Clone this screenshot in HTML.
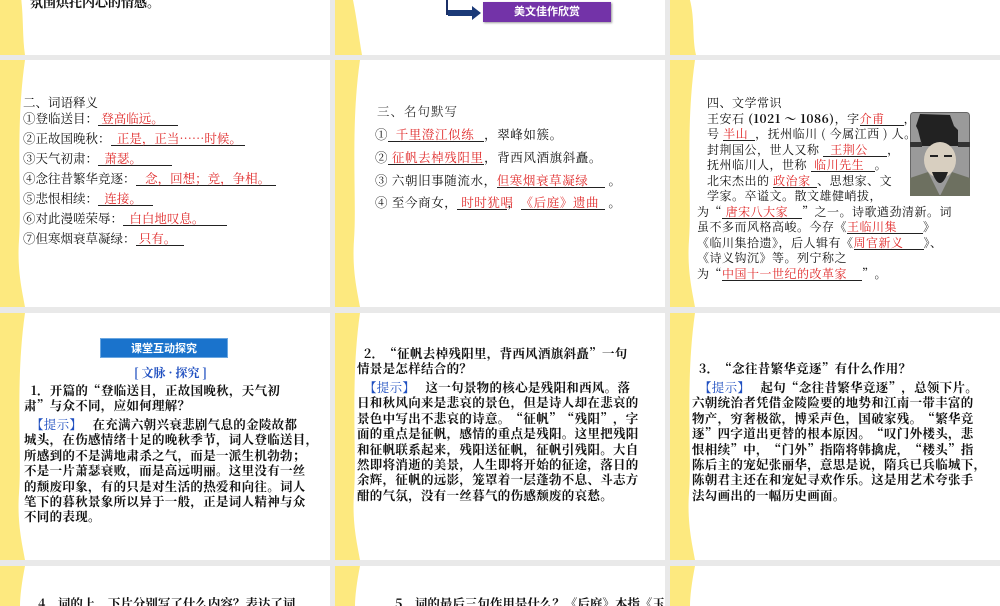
<!DOCTYPE html>
<html><head><meta charset="utf-8">
<style>
*{margin:0;padding:0;box-sizing:border-box}
body{width:1000px;height:600px;background:#e9e9e9;position:relative;overflow:hidden;font-family:"Noto Serif CJK SC","Liberation Serif",serif;color:#111}
.s{position:absolute;background:#fff;overflow:hidden}
.s svg.b{position:absolute;left:0;top:0}
.t{position:absolute;white-space:nowrap;font-size:12.5px}
.r{color:#e02828}
.u{display:inline-block;border-bottom:1px solid #222;line-height:13px;text-align:left}
.bl{color:#1f4fc0}
.p{position:absolute;font-size:12.5px;line-height:15.4px;white-space:nowrap;letter-spacing:0.3px;font-weight:bold}
.p .k{color:#1f4fc0;font-weight:normal}
.c3 .t{font-size:12px;letter-spacing:0.5px}
</style></head><body>

<!-- Row 1 -->
<div class="s" style="left:0;top:-10px;width:330px;height:65px">
<svg class="b" width="30" height="65"><path d="M0,0 L20,0 C24,25 22,45 25,65 L0,65Z" fill="#fde97f"/></svg>
<div class="t" style="left:30px;top:2px;font-weight:bold;font-size:13px">氛围烘托内心的情感。</div>
</div>
<div class="s" style="left:335px;top:0;width:330px;height:55px">
<svg class="b" width="30" height="55"><path d="M0,0 L18,0 C22,20 24,38 27,55 L0,55Z" fill="#fde97f"/></svg>
<div style="position:absolute;left:111px;top:0;width:2px;height:15px;background:#1b2f66"></div>
<svg style="position:absolute;left:113px;top:6px" width="34" height="14"><path d="M0,4 H24 V0 L33,7 L24,14 V10 H0Z" fill="#1b3a78"/></svg>
<div style="position:absolute;left:148px;top:2px;width:128px;height:20px;background:#7333a8;color:#fff;font:bold 11px 'Liberation Sans','Noto Sans CJK SC',sans-serif;text-align:center;line-height:20px;box-shadow:1px 1px 2px #999">美文佳作欣赏</div>
</div>
<div class="s" style="left:670px;top:0;width:330px;height:55px">
<svg class="b" width="30" height="55"><path d="M0,0 L20,0 C25,20 22,38 26,55 L0,55Z" fill="#fde97f"/></svg>
</div>

<!-- Row 2 -->
<div class="s" style="left:0;top:60px;width:330px;height:247px">
<svg class="b" width="30" height="247"><path d="M0,0 L25,0 C15,70 22,140 19,180 C17,210 22,230 25,247 L0,247Z" fill="#fde97f"/></svg>
<div class="t" style="left:23px;top:33px">二、词语释义</div>
<div class="t" style="left:23px;top:49px">①登临送目：<span class="u r" style="width:80px">&nbsp;登高临远。</span></div>
<div class="t" style="left:23px;top:69px">②正故国晚秋：<span class="u r" style="width:134px">&nbsp;&nbsp;正是，正当……时候。</span></div>
<div class="t" style="left:23px;top:89px">③天气初肃：<span class="u r" style="width:74px">&nbsp;&nbsp;萧瑟。</span></div>
<div class="t" style="left:23px;top:109px">④念往昔繁华竞逐：<span class="u r" style="width:140px">&nbsp;&nbsp;&nbsp;念，回想；竞，争相。</span></div>
<div class="t" style="left:23px;top:129px">⑤悲恨相续：<span class="u r" style="width:55px">&nbsp;&nbsp;连接。</span></div>
<div class="t" style="left:23px;top:149px">⑥对此漫嗟荣辱：<span class="u r" style="width:104px">&nbsp;&nbsp;白白地叹息。</span></div>
<div class="t" style="left:23px;top:169px">⑦但寒烟衰草凝绿：<span class="u r" style="width:48px">&nbsp;只有。</span></div>
</div>
<div class="s" style="left:335px;top:60px;width:330px;height:247px">
<svg class="b" width="30" height="247"><path d="M0,0 L25,0 C15,70 22,140 19,180 C17,210 22,230 25,247 L0,247Z" fill="#fde97f"/></svg>
<div class="t" style="left:42px;top:42px;color:#333;letter-spacing:1px">三、名句默写</div>
<div class="t" style="left:40px;top:65px;letter-spacing:0.6px">①<span class="u r" style="width:96px">&nbsp;&nbsp;千里澄江似练</span>，翠峰如簇。</div>
<div class="t" style="left:40px;top:88px;letter-spacing:0.6px">②<span class="u r" style="width:96px">&nbsp;征帆去棹残阳里</span>，背西风酒旗斜矗。</div>
<div class="t" style="left:40px;top:111px;letter-spacing:0.6px">③ 六朝旧事随流水，<span class="u r" style="width:108px">但寒烟衰草凝绿</span>&nbsp;。</div>
<div class="t" style="left:40px;top:133px;letter-spacing:0.6px">④ 至今商女，<span class="u r" style="width:50px">&nbsp;时时犹唱</span>，<span class="u r" style="width:84px">《后庭》遗曲</span>&nbsp;。</div>
</div>
<div class="s c3" style="left:670px;top:60px;width:330px;height:247px">
<svg class="b" width="30" height="247"><path d="M0,0 L25,0 C15,70 22,140 19,180 C17,210 22,230 25,247 L0,247Z" fill="#fde97f"/></svg>
<div class="t" style="left:37px;top:34px">四、文学常识</div>
<div class="t" style="left:37px;top:50px">王安石 <b>(1021 ～ 1086)</b>，字<span class="u r" style="width:44px">介甫</span>，</div>
<div class="t" style="left:37px;top:65px">号 <span class="u r" style="width:32px">半山</span>，抚州临川 ( 今属江西 ) 人。</div>
<div class="t" style="left:37px;top:81px">封荆国公，世人又称 <span class="u r" style="width:64px">&nbsp;&nbsp;王荆公</span>，</div>
<div class="t" style="left:37px;top:96px">抚州临川人，世称 <span class="u r" style="width:64px">&nbsp;临川先生</span>。</div>
<div class="t" style="left:37px;top:112px">北宋杰出的 <span class="u r" style="width:44px">政治家</span>、思想家、文</div>
<div class="t" style="left:37px;top:127px">学家。卒谥文。散文雄健峭拔，</div>
<div class="t" style="left:27px;top:143px">为“<span class="u r" style="width:80px">&nbsp;唐宋八大家</span>”之一。诗歌遒劲清新。词</div>
<div class="t" style="left:27px;top:158px">虽不多而风格高峻。今存《<span class="u r" style="width:76px">王临川集</span>》</div>
<div class="t" style="left:27px;top:174px">《临川集拾遗》，后人辑有《<span class="u r" style="width:70px">周官新义</span>》、</div>
<div class="t" style="left:27px;top:189px">《诗义钩沉》等。列宁称之</div>
<div class="t" style="left:27px;top:205px">为“<span class="u r" style="width:140px">中国十一世纪的改革家</span>”。</div>
<svg style="position:absolute;left:240px;top:52px" width="60" height="84"><rect x="0.5" y="0.5" width="59" height="83" rx="3" fill="#9a9a9a" stroke="#666"/><path d="M6,14 L10,2 L40,3 L44,14 L48,18 L48,34 L12,34 L8,18Z" fill="#222"/><rect x="0" y="30" width="12" height="5" fill="#333"/><rect x="48" y="30" width="12" height="5" fill="#333"/><ellipse cx="30" cy="48" rx="16" ry="18" fill="#d8cfc0"/><path d="M22,60 Q30,82 38,60Z" fill="#222"/><path d="M0,84 L0,66 L18,60 L30,84Z M60,84 L60,66 L42,60 L30,84Z" fill="#6d7060"/><path d="M20,44 h8 M34,44 h8" stroke="#222" stroke-width="2"/></svg>
</div>

<!-- Row 3 -->
<div class="s" style="left:0;top:313px;width:330px;height:247px">
<svg class="b" width="30" height="247"><path d="M0,0 L25,0 C15,70 22,140 19,180 C17,210 22,230 25,247 L0,247Z" fill="#fde97f"/></svg>
<div style="position:absolute;left:100px;top:25px;width:128px;height:20px;background:#1a73cc;color:#fff;font:bold 11px 'Liberation Sans','Noto Sans CJK SC',sans-serif;text-align:center;line-height:20px;border:1px solid #6aa6e0">课堂互动探究</div>
<div class="t bl" style="left:134px;top:51px;font-size:12px;font-weight:bold">[ 文脉 · 探究 ]</div>
<div class="p" style="left:24px;top:70px">&nbsp;&nbsp;1．开篇的“登临送目，正故国晚秋，天气初<br>肃”与众不同，应如何理解？</div>
<div class="p" style="left:24px;top:104px"><span class="k">&nbsp;&nbsp;【提示】</span>&nbsp;&nbsp;&nbsp;在充满六朝兴衰悲剧气息的金陵故都<br>城头，在伤感情绪十足的晚秋季节，词人登临送目，<br>所感到的不是满地肃杀之气，而是一派生机勃勃；<br>不是一片萧瑟衰败，而是高远明丽。这里没有一丝<br>的颓废印象，有的只是对生活的热爱和向往。词人<br>笔下的暮秋景象所以异于一般，正是词人精神与众<br>不同的表现。</div>
</div>
<div class="s" style="left:335px;top:313px;width:330px;height:247px">
<svg class="b" width="30" height="247"><path d="M0,0 L25,0 C15,70 22,140 19,180 C17,210 22,230 25,247 L0,247Z" fill="#fde97f"/></svg>
<div class="p" style="left:22px;top:33px">&nbsp;&nbsp;2．“征帆去棹残阳里，背西风酒旗斜矗”一句<br>情景是怎样结合的？</div>
<div class="p" style="left:22px;top:67px"><span class="k">&nbsp;&nbsp;【提示】</span>&nbsp;&nbsp;&nbsp;这一句景物的核心是残阳和西风。落<br>日和秋风向来是悲哀的景色，但是诗人却在悲哀的<br>景色中写出不悲哀的诗意。“征帆”“残阳”，字<br>面的重点是征帆，感情的重点是残阳。这里把残阳<br>和征帆联系起来，残阳送征帆，征帆引残阳。大自<br>然即将消逝的美景，人生即将开始的征途，落日的<br>余辉，征帆的远影，笼罩着一层蓬勃不息、斗志方<br>酣的气氛，没有一丝暮气的伤感颓废的哀愁。</div>
</div>
<div class="s" style="left:670px;top:313px;width:330px;height:247px">
<svg class="b" width="30" height="247"><path d="M0,0 L25,0 C15,70 22,140 19,180 C17,210 22,230 25,247 L0,247Z" fill="#fde97f"/></svg>
<div class="p" style="left:22px;top:48px">&nbsp;&nbsp;3．“念往昔繁华竞逐”有什么作用？</div>
<div class="p" style="left:22px;top:67px"><span class="k">&nbsp;&nbsp;【提示】</span>&nbsp;&nbsp;&nbsp;起句“念往昔繁华竞逐”，总领下片。<br>六朝统治者凭借金陵险要的地势和江南一带丰富的<br>物产，穷奢极欲，博采声色，国破家残。“繁华竞<br>逐”四字道出更替的根本原因。“叹门外楼头，悲<br>恨相续”中，“门外”指隋将韩擒虎，“楼头”指<br>陈后主的宠妃张丽华，意思是说，隋兵已兵临城下，<br>陈朝君主还在和宠妃寻欢作乐。这是用艺术夸张手<br>法勾画出的一幅历史画面。</div>
</div>

<!-- Row 4 -->
<div class="s" style="left:0;top:566px;width:330px;height:40px">
<svg class="b" width="30" height="40"><path d="M0,0 L25,0 C22,15 20,30 20,40 L0,40Z" fill="#fde97f"/></svg>
<div class="t" style="left:38px;top:28px;font-weight:bold">4．词的上、下片分别写了什么内容？表达了词</div>
</div>
<div class="s" style="left:335px;top:566px;width:330px;height:40px">
<svg class="b" width="30" height="40"><path d="M0,0 L25,0 C22,15 20,30 20,40 L0,40Z" fill="#fde97f"/></svg>
<div class="t" style="left:60px;top:28px;font-weight:bold">5．词的最后三句作用是什么？《后庭》本指《玉</div>
</div>
<div class="s" style="left:670px;top:566px;width:330px;height:40px">
<svg class="b" width="30" height="40"><path d="M0,0 L25,0 C22,15 20,30 20,40 L0,40Z" fill="#fde97f"/></svg>
</div>
</body></html>
